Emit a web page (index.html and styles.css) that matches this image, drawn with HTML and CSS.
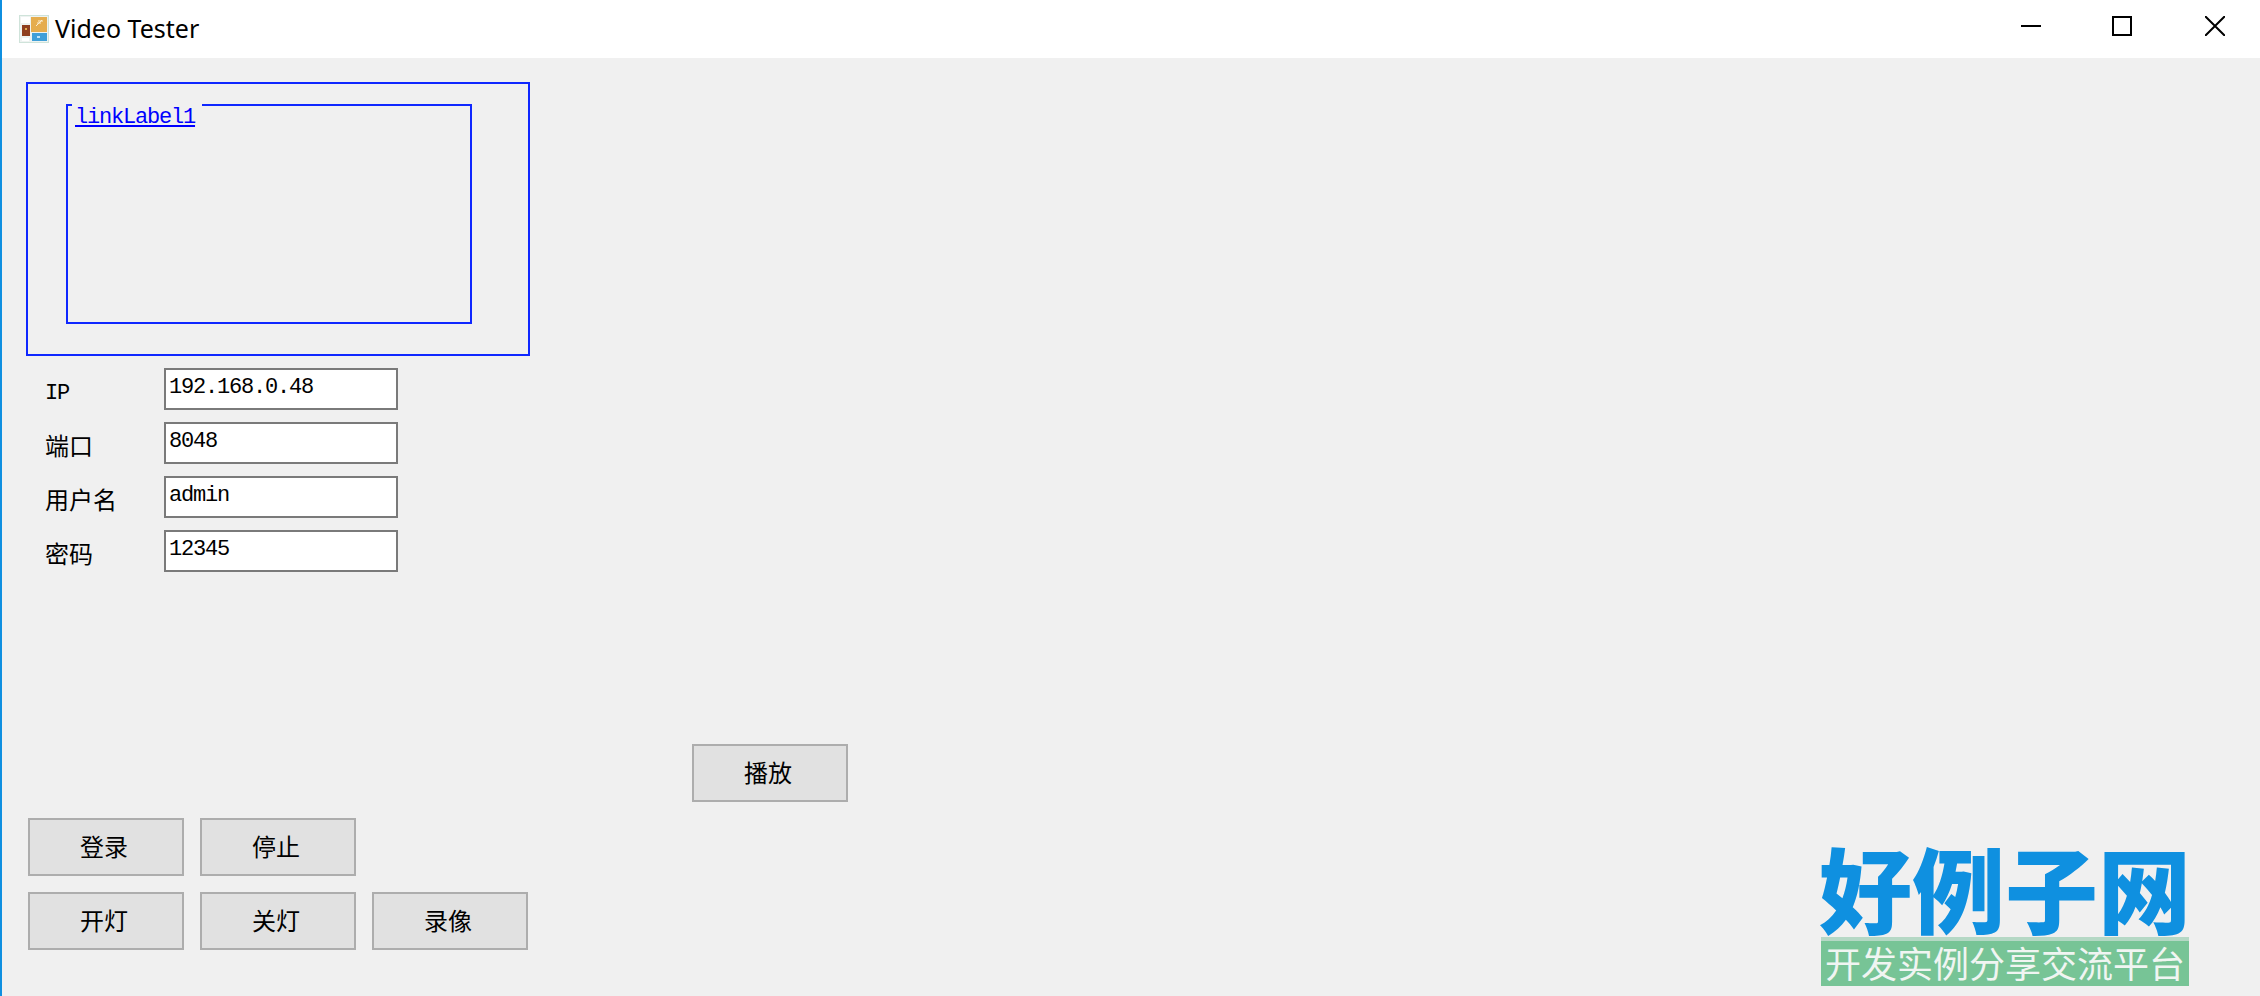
FILE: index.html
```html
<!DOCTYPE html>
<html lang="zh-CN">
<head>
  <meta charset="UTF-8">
  <title>Video Tester</title>
  <link rel="stylesheet" href="styles.css">
</head>
<body>
<div class="window">
  <div class="titlebar">
    <svg class="app-icon" viewBox="0 0 30 28">
      <rect width="30" height="28" fill="#cfe3da"/>
      <rect x="1" y="1" width="28" height="26" fill="#eef3f1"/>
      <rect x="2" y="2" width="9" height="6" fill="#fff"/>
      <rect x="12" y="2" width="16" height="15" fill="#e5ad4e"/>
      <path d="M17 11l6-6M19 6h5M18 8h4" stroke="#fbeed2" stroke-width="1" fill="none"/>
      <rect x="3" y="10" width="8" height="11" fill="#8f3f1f"/>
      <rect x="6" y="13" width="2" height="2" fill="#e5ad4e"/>
      <rect x="13" y="18" width="15" height="8" fill="#3f9fd8"/>
      <rect x="18" y="21" width="3" height="2" fill="#bfe2f5"/>
      <rect x="3" y="23" width="7" height="3" fill="#fff"/>
    </svg>
    <span class="title">Video Tester</span>
    <div class="win-controls">
      <svg class="win-btn" viewBox="0 0 20 20"><path d="M0 10h20" stroke="#000" stroke-width="2"/></svg>
      <svg class="win-btn" viewBox="0 0 20 20"><rect x="1" y="1" width="18" height="18" fill="none" stroke="#000" stroke-width="2"/></svg>
      <svg class="win-btn win-close" viewBox="0 0 20 20"><path d="M0 0L20 20M20 0L0 20" stroke="#000" stroke-width="2"/></svg>
    </div>
  </div>

  <div class="content">
    <div class="outer-panel">
      <div class="inner-panel">
        <a class="link-label" href="#">linkLabel1</a>
      </div>
    </div>

    <div class="login-form">
      <label class="field-label latin">IP</label>
      <input class="field" type="text" value="192.168.0.48">
      <label class="field-label">端口</label>
      <input class="field" type="text" value="8048">
      <label class="field-label">用户名</label>
      <input class="field" type="text" value="admin">
      <label class="field-label">密码</label>
      <input class="field" type="text" value="12345">
    </div>

    <div class="play-row">
      <button class="btn">播放</button>
    </div>
    <div class="btn-row">
      <button class="btn">登录</button>
      <button class="btn">停止</button>
    </div>
    <div class="btn-row">
      <button class="btn">开灯</button>
      <button class="btn">关灯</button>
      <button class="btn">录像</button>
    </div>
  </div>

  <div class="watermark">
    <div class="wm-name">好例子网</div>
    <div class="wm-slogan">开发实例分享交流平台</div>
  </div>
</div>
</body>
</html>
```

FILE: styles.css
```css
html, body { margin: 0; padding: 0; }
body { background: #f0f0f0; font-family: "Liberation Mono", "Noto Sans CJK SC", monospace; color: #000; }
.window {
  position: relative;
  box-sizing: border-box;
  width: 2260px;
  height: 996px;
  overflow: hidden;
  border-left: 2px solid #0f8fe0;
  background: #f0f0f0;
}

/* title bar */
.titlebar {
  display: flex;
  align-items: center;
  height: 58px;
  background: #fff;
  padding-left: 17px;
}
.app-icon { width: 30px; height: 28px; margin-right: 6px; }
.title { font-family: "Noto Sans", "Open Sans", sans-serif; font-size: 25px; line-height: 58px; margin-top: -2px; }
.win-controls { display: flex; margin-left: auto; gap: 71px; padding-right: 35px; }
.win-btn { width: 20px; height: 20px; margin-top: -6px; }
.win-close { margin-left: 2px; }

/* main area */
.content { padding: 24px 0 0 24px; }
.outer-panel {
  box-sizing: border-box;
  width: 504px;
  height: 274px;
  border: 2px solid #0f27ff;
  padding: 20px 0 0 38px;
}
.inner-panel {
  position: relative;
  box-sizing: border-box;
  width: 406px;
  height: 220px;
  border: 2px solid #0f27ff;
}
/* the label sits on the panel's top border and cuts a gap in it */
.link-label {
  position: absolute;
  top: -2px;
  left: 4px;
  height: 24px;
  padding: 2px 7px 0 3px;
  background: #f0f0f0;
  color: #0000ff;
  font-size: 22px;
  letter-spacing: -1.2px;
  line-height: 24px;
}

.login-form {
  display: grid;
  grid-template-columns: 118px 234px;
  grid-auto-rows: 42px;
  row-gap: 12px;
  align-items: center;
  margin: 12px 0 0 20px;
}
.field-label { font-size: 24px; line-height: 42px; padding-top: 12px; margin-left: -1px; }
.field-label.latin { font-size: 22px; letter-spacing: -1.2px; padding-top: 10px; }
.field {
  box-sizing: border-box;
  width: 234px;
  height: 42px;
  border: 2px solid #7a7a7a;
  padding: 0 3px 4px 3px;
  margin: 0;
  background: #fff;
  color: #000;
  font-family: "Liberation Mono", monospace;
  font-size: 22px;
  letter-spacing: -1.2px;
  outline: none;
}

/* buttons */
.btn {
  box-sizing: border-box;
  width: 156px;
  height: 58px;
  border: 2px solid #adadad;
  border-radius: 0;
  padding: 0 4px 3px 0;
  background: #e1e1e1;
  color: #000;
  font-family: "Noto Sans CJK SC", sans-serif;
  font-size: 24px;
}
.play-row { margin: 172px 0 0 666px; }
.btn-row { display: flex; gap: 16px; margin: 16px 0 0 2px; }

/* site watermark, lies over the window corner */
.watermark { position: absolute; left: 1817px; top: 850px; width: 370px; }
.wm-name {
  height: 87px;
  color: #0f90e0;
  font-family: "Liberation Sans", "Noto Sans CJK SC", sans-serif;
  font-size: 93px;
  font-weight: 900;
  line-height: 90px;
  white-space: nowrap;
}
.wm-slogan {
  box-sizing: border-box;
  height: 49px;
  margin-left: 2px;
  border-top: 4px solid #b5d8c5;
  background: #77c496;
  color: #f0f5f2;
  font-family: "Liberation Sans", "Noto Sans CJK SC", sans-serif;
  font-size: 36px;
  line-height: 49px;
  white-space: nowrap;
  text-align: center;
}
```
